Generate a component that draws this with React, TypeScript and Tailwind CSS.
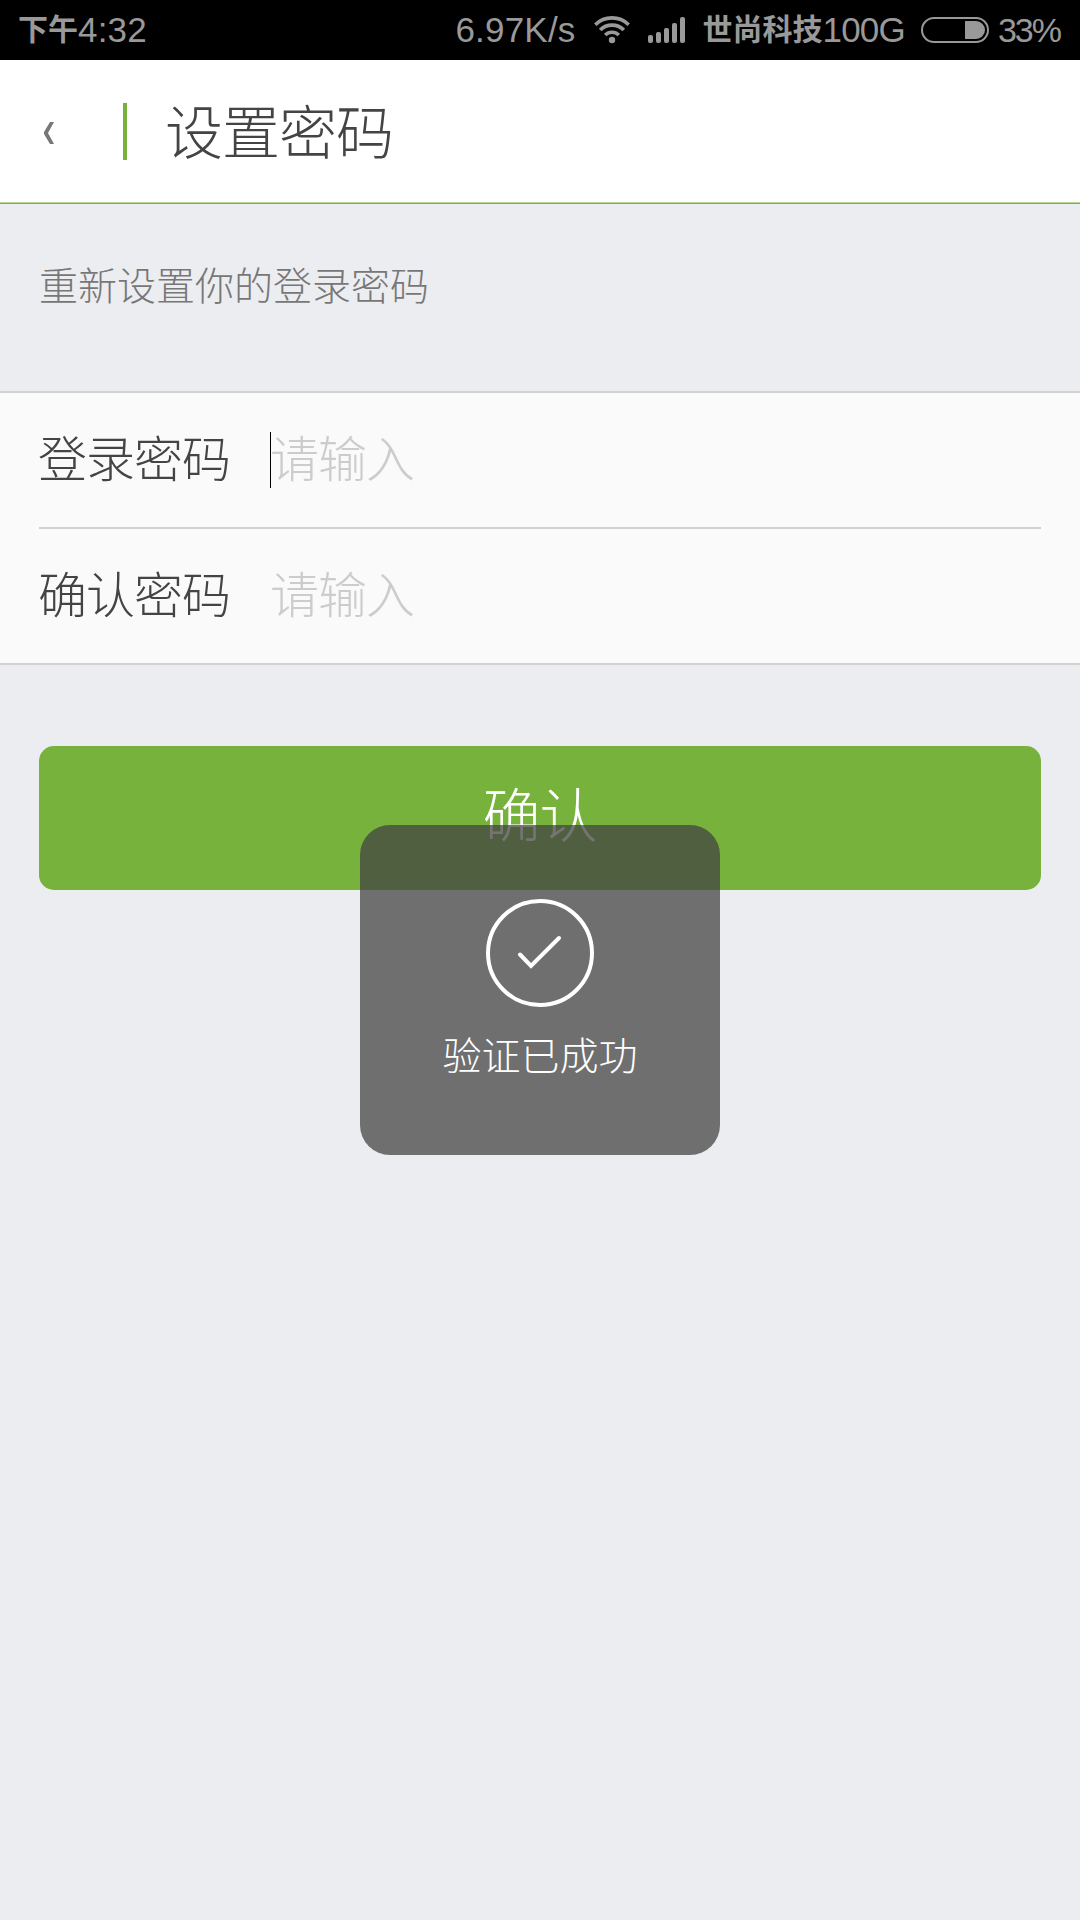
import React, { useState } from 'react';

const WifiIcon: React.FC = () => (
  <svg width="36" height="28" viewBox="0 0 36 28" fill="none" stroke="#999999" strokeWidth="3.6">
    <path d="M1.3 8.8 A23.6 23.6 0 0 1 34.7 8.8" />
    <path d="M6.2 14 A16.6 16.6 0 0 1 29.8 14" />
    <path d="M11.2 19 A9.6 9.6 0 0 1 24.8 19" />
    <circle cx="18" cy="24" r="3.2" fill="#999999" stroke="none" />
  </svg>
);

const SignalIcon: React.FC = () => (
  <svg width="37" height="26" viewBox="0 0 37 26" fill="#999999">
    <rect x="0" y="18" width="5" height="8" rx="2" />
    <rect x="8" y="15" width="5" height="11" rx="2" />
    <rect x="16" y="11" width="5" height="15" rx="2" />
    <rect x="24" y="6" width="5" height="20" rx="2" />
    <rect x="32" y="0" width="5" height="26" rx="2" />
  </svg>
);

const BatteryIcon: React.FC = () => (
  <svg width="68" height="26" viewBox="0 0 68 26" fill="none">
    <rect x="1" y="1" width="66" height="24" rx="12" stroke="#999999" strokeWidth="2" />
    <path d="M44 4 H55 A9 9 0 0 1 55 22 H44 Z" fill="#999999" />
  </svg>
);

const StatusBar: React.FC = () => (
  <div className="flex h-[60px] shrink-0 items-center bg-black pr-5 pl-[18px] text-[#999999]">
    <div className="flex items-center whitespace-nowrap leading-[60px]">
      <span className="text-[30px] font-bold">下午</span>
      <span className="text-[35px] tracking-[0.2px]">4:32</span>
    </div>
    <div className="ml-auto flex items-center whitespace-nowrap leading-[60px]">
      <span className="mr-[18px] text-[35px] tracking-[0.2px]">6.97K/s</span>
      <WifiIcon />
      <div className="ml-[18px]">
        <SignalIcon />
      </div>
      <span className="ml-[18px] text-[30px] font-bold">世尚科技</span>
      <span className="mr-4 text-[35px] tracking-[-0.8px]">100G</span>
      <BatteryIcon />
      <span className="ml-[9px] text-[34px] tracking-[-2px]">33%</span>
    </div>
  </div>
);

const Header: React.FC = () => (
  <header className="flex h-[144px] shrink-0 items-center border-b border-[#77b33c] bg-white shadow-[inset_0_-1px_#bbd99d]">
    <button className="mt-[3px] ml-[44px]">
      <svg width="10" height="22" viewBox="0 0 10 22" fill="#777777">
        <path d="M6 0 H10 L4 11 L10 22 H6 L0 12 V10 Z" />
      </svg>
    </button>
    <div className="ml-[69px] h-[57px] w-1 bg-[#77b33c]" />
    <h1 className="mt-1 ml-[38px] text-[58px] leading-none font-light tracking-[-1px] text-[#444444]">设置密码</h1>
  </header>
);

interface PasswordRowProps {
  label: string;
  value: string;
  focused?: boolean;
  onChange: (value: string) => void;
}

const PasswordRow: React.FC<PasswordRowProps> = ({ label, value, focused, onChange }) => (
  <label className="flex h-[134px] items-center text-[49px] font-light tracking-[-1px]">
    <span className="-ml-px w-[232px] pt-px leading-none text-[#444444]">{label}</span>
    {focused && <span className="-mr-px h-14 w-px bg-black" />}
    <input
      type="password"
      value={value}
      placeholder="请输入"
      onChange={(e) => onChange(e.target.value)}
      className="h-[72px] min-w-0 flex-1 pt-px font-light caret-black outline-none placeholder:text-[#cccccc]"
    />
  </label>
);

const SuccessToast: React.FC = () => (
  <div className="absolute top-[825px] left-[360px] flex h-[330px] w-[360px] flex-col items-center rounded-[30px] bg-[#404040]/73 pt-[74px] text-white">
    <svg width="108" height="108" viewBox="0 0 108 108" fill="none" stroke="currentColor" strokeWidth="4">
      <circle cx="54" cy="54" r="52" />
      <path d="M34 55.5 L45 67 L73 39" strokeLinecap="round" />
    </svg>
    <p className="mt-[29px] text-[39px] leading-[42px] font-light">验证已成功</p>
  </div>
);

export default function App() {
  const [password, setPassword] = useState('');
  const [confirm, setConfirm] = useState('');

  return (
    <div className="relative flex h-[1920px] w-[1080px] flex-col overflow-hidden bg-[#ecedf1] font-['Liberation_Sans','Noto_Sans_CJK_SC',sans-serif]">
      <StatusBar />
      <Header />

      <p className="h-[187px] px-[39px] pt-[62px] text-[39px] leading-[42px] font-light text-[#777777]">
        重新设置你的登录密码
      </p>

      {/* Password form */}
      <div className="border-y-2 border-[#d2d2d2] bg-[#fafafa] px-[39px]">
        <PasswordRow label="登录密码" value={password} focused onChange={setPassword} />
        <div className="h-0.5 bg-[#d2d2d2]" />
        <PasswordRow label="确认密码" value={confirm} onChange={setConfirm} />
      </div>

      <button className="mx-[39px] mt-[81px] h-[144px] rounded-[15px] bg-[#77b33c] pr-px pb-0.5 text-[58px] leading-none font-light tracking-[-1px] text-white">
        确认
      </button>

      <SuccessToast />
    </div>
  );
}
